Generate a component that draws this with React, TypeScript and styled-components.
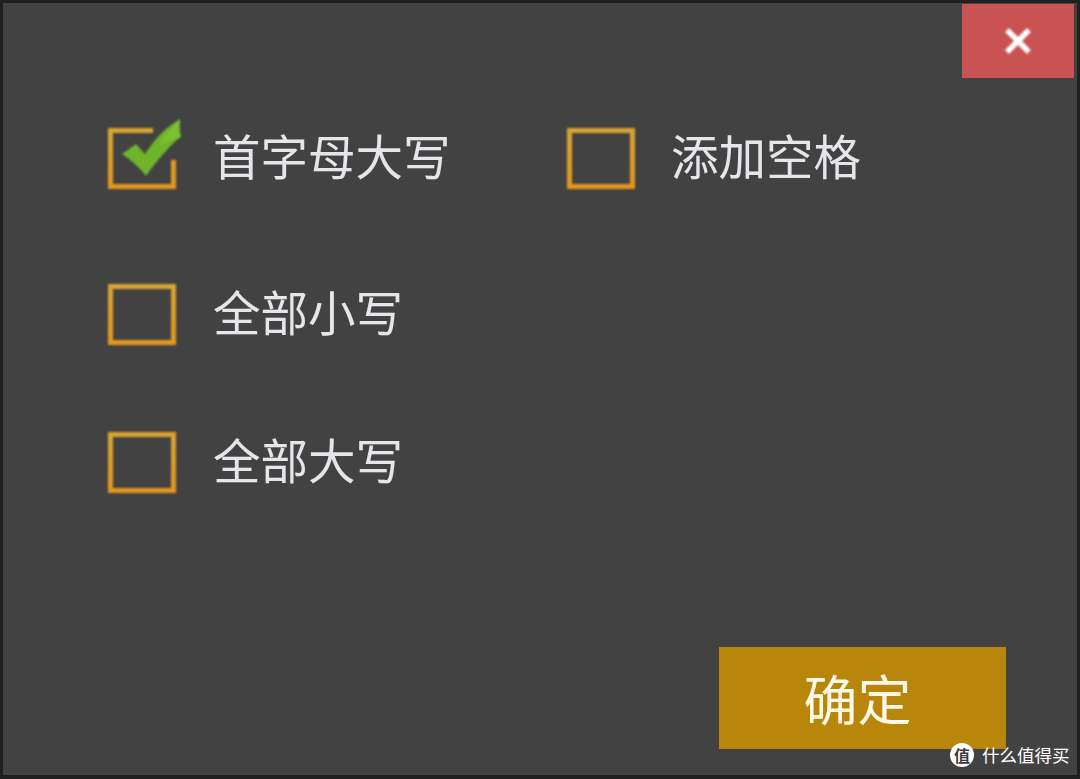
import React from "react";
import styled, { createGlobalStyle } from "styled-components";

const Global = createGlobalStyle`
  html, body { margin: 0; padding: 0; background: #1c1c1c; }
  body { font-family: "Liberation Sans", "Noto Sans CJK SC", sans-serif; }
`;

const Dialog = styled.div`
  position: relative;
  box-sizing: border-box;
  width: 1080px;
  height: 779px;
  border: 3px solid #202020;
  border-bottom-width: 4px;
  background: #424242;
  display: flex;
  flex-direction: column;
  overflow: hidden;
`;

const TitleBar = styled.div`
  display: flex;
  justify-content: flex-end;
  padding: 1px 3px 0 0;
  height: 75px;
  box-sizing: border-box;
`;

const CloseButton = styled.button`
  width: 112px;
  height: 74px;
  border: 0;
  padding: 0;
  background: #c95253;
  color: #fff;
  display: flex;
  align-items: center;
  justify-content: center;
`;

const CloseIcon = styled.svg`
  width: 32px;
  height: 32px;
  filter: blur(1px);
`;

const Options = styled.div`
  display: grid;
  grid-template-columns: 459px auto;
  grid-template-rows: 156px 148px 61px;
  padding: 50px 0 0 105px;
  flex: 1;
  align-content: start;
`;

const Option = styled.label<{ $row: number; $col: number }>`
  grid-row: ${(p) => p.$row};
  grid-column: ${(p) => p.$col};
  display: flex;
  align-items: flex-start;
  height: 61px;
`;

const Box = styled.span`
  position: relative;
  flex: none;
  box-sizing: border-box;
  width: 68px;
  height: 61px;
  border: 5px solid;
  border-image: linear-gradient(#d9a433, #e2981f) 1;
  filter: blur(0.8px);
`;

const CheckMark = styled.svg`
  position: absolute;
  left: 8px;
  top: -15px;
  width: 66px;
  height: 66px;
`;

const Notch = styled.span`
  position: absolute;
  right: -5px;
  top: -5px;
  width: 23px;
  height: 32px;
  background: #424242;
`;

const Label = styled.span<{ $gap: number }>`
  margin-left: ${(p) => p.$gap}px;
  margin-top: -4px;
  font-family: "Noto Sans CJK SC", sans-serif;
  font-size: 47.5px;
  line-height: 61px;
  color: #e4e6ea;
  white-space: nowrap;
  filter: blur(0.7px);
`;

const Footer = styled.div`
  display: flex;
  justify-content: flex-end;
  padding: 0 71px 26px 0;
`;

const ConfirmButton = styled.button`
  width: 287px;
  height: 102px;
  border: 0;
  padding: 0 10px 0 0;
  background: #b8860b;
  color: #fff8e6;
  font-family: "Noto Sans CJK SC", sans-serif;
  font-size: 54px;
  line-height: 1;
`;

const ConfirmText = styled.span`
  display: block;
  filter: blur(0.6px);
`;

const Watermark = styled.div`
  position: absolute;
  left: 947px;
  top: 740px;
  display: flex;
  align-items: center;
  gap: 8px;
  color: #fff;
  font-family: "Noto Sans CJK SC", sans-serif;
  font-size: 17.5px;
  line-height: 24px;
  white-space: nowrap;
`;

const LogoBadge = styled.span`
  width: 24px;
  height: 24px;
  border-radius: 50%;
  background: #fff;
  color: #3a3a3a;
  font-size: 16px;
  font-weight: 700;
  line-height: 24px;
  text-align: center;
`;

const options = [
  { text: "首字母大写", row: 1, col: 1, gap: 37, checked: true },
  { text: "添加空格", row: 1, col: 2, gap: 36, checked: false },
  { text: "全部小写", row: 2, col: 1, gap: 37, checked: false },
  { text: "全部大写", row: 3, col: 1, gap: 37, checked: false },
];

export default function App() {
  return (
    <>
      <Global />
      <Dialog>
        <TitleBar>
          <CloseButton aria-label="关闭">
            <CloseIcon viewBox="0 0 32 32">
              <path d="M5 5 L27 27 M27 5 L5 27" stroke="#fff" strokeWidth="5.5" fill="none" />
            </CloseIcon>
          </CloseButton>
        </TitleBar>
        <Options>
          {options.map((o) => (
            <Option key={o.text} $row={o.row} $col={o.col}>
              <Box>
                {o.checked && (
                  <>
                    <Notch />
                    <CheckMark viewBox="0 0 66 66">
                      <path
                        d="M1 36 L15 26 L24 36 C32 24 42 11 59 1 C58 9 59 15 60 19 C54 22 36 42 25 58 C19 50 10 42 1 36 Z"
                        fill="#6fb52b"
                      />
                      <path d="M38 26 C44 17 50 10 59 1 C58 9 59 15 60 19 C54 20 46 26 38 26 Z" fill="#7cc031" />
                    </CheckMark>
                  </>
                )}
              </Box>
              <Label $gap={o.gap}>{o.text}</Label>
            </Option>
          ))}
        </Options>
        <Footer>
          <ConfirmButton>
            <ConfirmText>确定</ConfirmText>
          </ConfirmButton>
        </Footer>
        <Watermark>
          <LogoBadge>值</LogoBadge>
          <span>什么值得买</span>
        </Watermark>
      </Dialog>
    </>
  );
}
